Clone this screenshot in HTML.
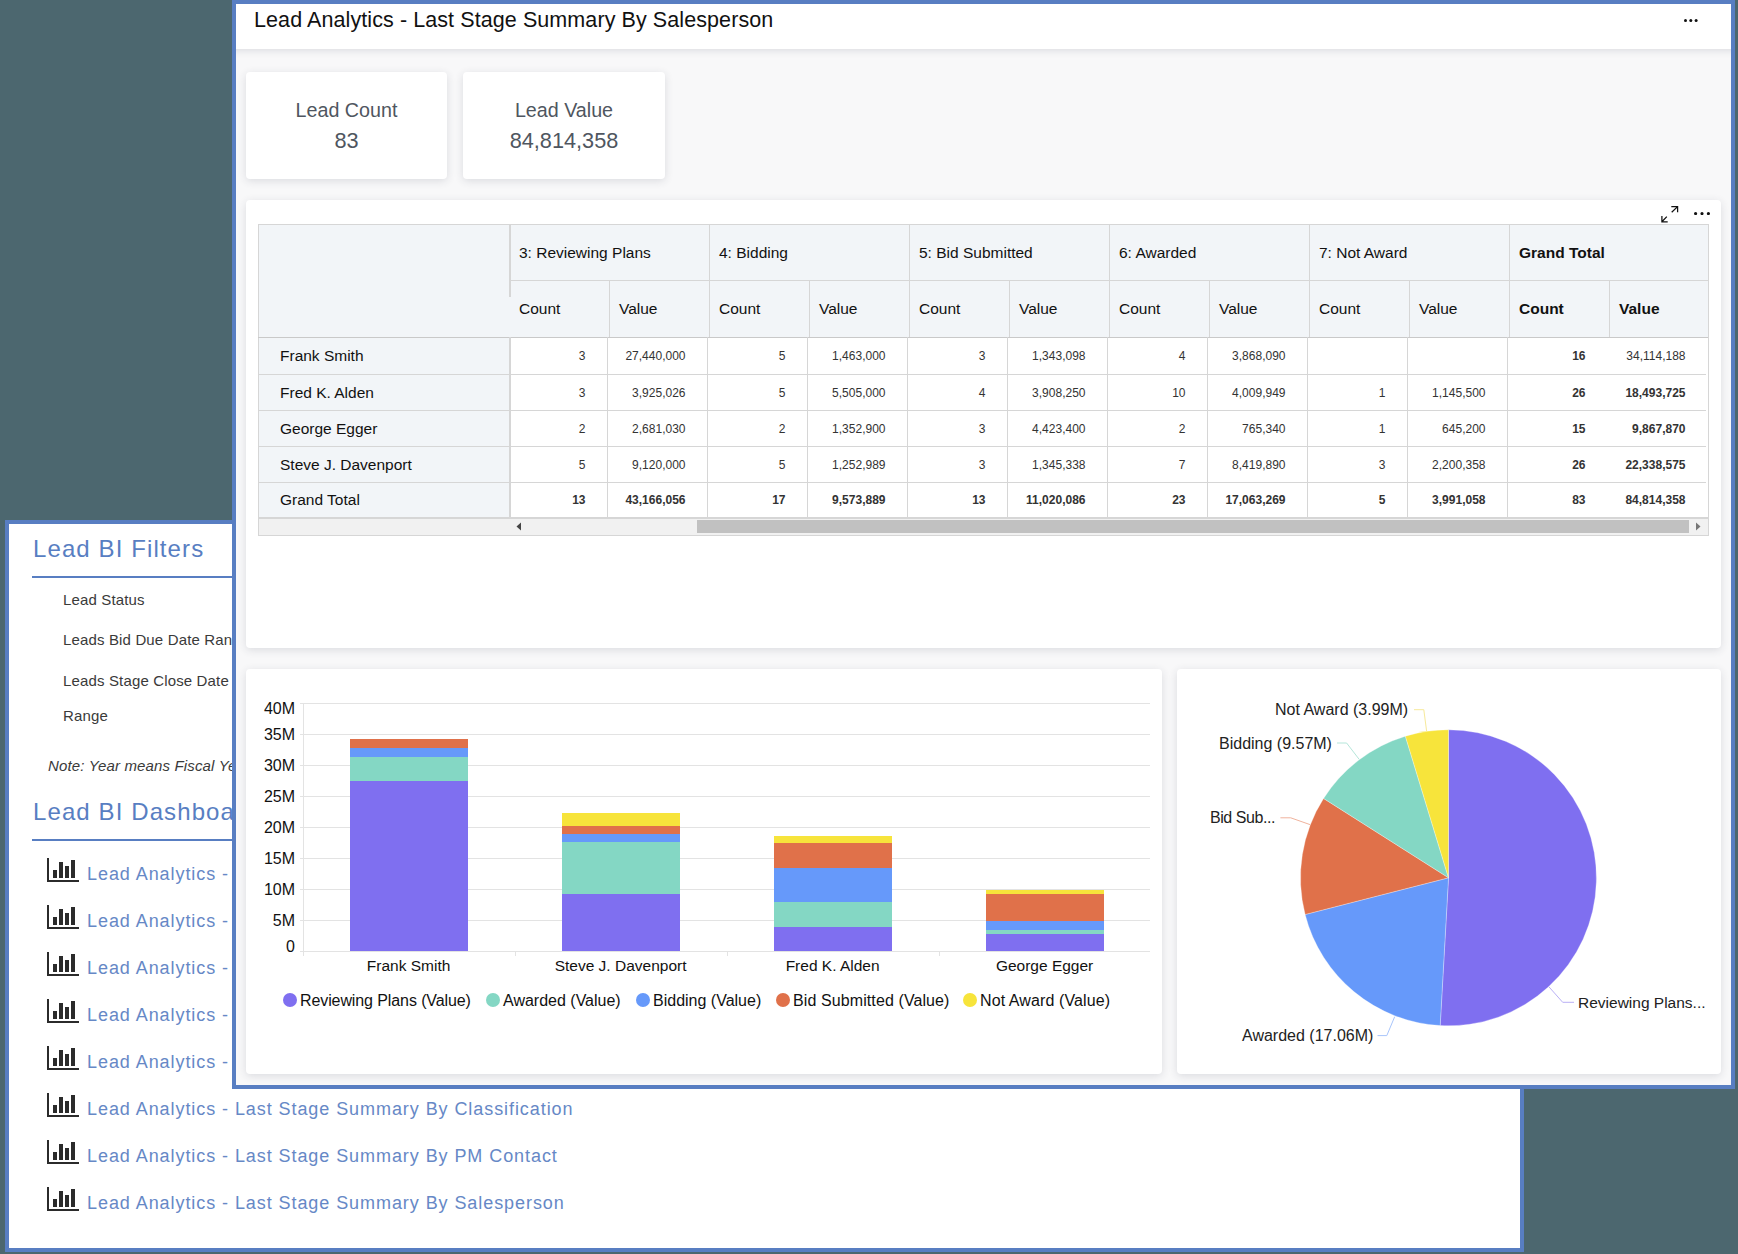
<!DOCTYPE html><html><head><meta charset="utf-8"><style>
*{margin:0;padding:0;box-sizing:border-box}
html,body{width:1738px;height:1254px;overflow:hidden;background:#4c676f;font-family:"Liberation Sans", sans-serif}
.a{position:absolute;white-space:nowrap}
.lp{position:absolute;left:5px;top:520px;width:1519px;height:732px;border:4px solid #587ec2;background:#fff}
.mp{position:absolute;left:232px;top:0px;width:1503px;height:1089px;border:4px solid #587ec2;background:#f8f8f9;overflow:hidden}
.card{position:absolute;background:#fff;border-radius:4px;box-shadow:0 2px 8px rgba(40,50,70,0.14)}
.lt{font-size:15px;color:#3a3a3a;letter-spacing:0.15px}
.dl{font-size:18px;color:#6688c6;letter-spacing:0.93px}
</style></head><body>

<div class="lp"></div>
<div class="a" style="left:33px;top:533.3px;font-size:24px;color:#587ec2;line-height:32px;letter-spacing:1.1px">Lead BI Filters</div>
<div class="a" style="left:32px;top:576px;width:200px;height:2px;background:#587ec2"></div>
<div class="a lt" style="left:63px;top:591px;line-height:17px">Lead Status</div>
<div class="a lt" style="left:63px;top:631px;line-height:17px">Leads Bid Due Date Range</div>
<div class="a lt" style="left:63px;top:672px;line-height:17px">Leads Stage Close Date</div>
<div class="a lt" style="left:63px;top:707px;line-height:17px">Range</div>
<div class="a lt" style="left:48px;top:757px;line-height:17px;font-style:italic">Note: Year means Fiscal Year</div>
<div class="a" style="left:33px;top:796px;font-size:24px;color:#587ec2;line-height:32px;letter-spacing:1.1px">Lead BI Dashboards</div>
<div class="a" style="left:32px;top:839px;width:200px;height:2px;background:#587ec2"></div>
<svg width="34" height="26" viewBox="0 0 34 26" style="position:absolute;left:47px;top:858px"><rect x="0" y="0" width="2" height="24" fill="#2b2b2b"/><rect x="0" y="22" width="32" height="2" fill="#2b2b2b"/><rect x="6" y="12" width="4" height="8" fill="#2b2b2b"/><rect x="12" y="4" width="4" height="16" fill="#2b2b2b"/><rect x="18" y="8" width="4" height="12" fill="#2b2b2b"/><rect x="24" y="2" width="4" height="18" fill="#2b2b2b"/></svg>
<div class="a dl" style="left:87px;top:863.5px;line-height:20px">Lead Analytics - Last Stage Summary By Bid Type</div>
<svg width="34" height="26" viewBox="0 0 34 26" style="position:absolute;left:47px;top:905px"><rect x="0" y="0" width="2" height="24" fill="#2b2b2b"/><rect x="0" y="22" width="32" height="2" fill="#2b2b2b"/><rect x="6" y="12" width="4" height="8" fill="#2b2b2b"/><rect x="12" y="4" width="4" height="16" fill="#2b2b2b"/><rect x="18" y="8" width="4" height="12" fill="#2b2b2b"/><rect x="24" y="2" width="4" height="18" fill="#2b2b2b"/></svg>
<div class="a dl" style="left:87px;top:910.5px;line-height:20px">Lead Analytics - Last Stage Summary By Customer</div>
<svg width="34" height="26" viewBox="0 0 34 26" style="position:absolute;left:47px;top:952px"><rect x="0" y="0" width="2" height="24" fill="#2b2b2b"/><rect x="0" y="22" width="32" height="2" fill="#2b2b2b"/><rect x="6" y="12" width="4" height="8" fill="#2b2b2b"/><rect x="12" y="4" width="4" height="16" fill="#2b2b2b"/><rect x="18" y="8" width="4" height="12" fill="#2b2b2b"/><rect x="24" y="2" width="4" height="18" fill="#2b2b2b"/></svg>
<div class="a dl" style="left:87px;top:957.5px;line-height:20px">Lead Analytics - Last Stage Summary By Division</div>
<svg width="34" height="26" viewBox="0 0 34 26" style="position:absolute;left:47px;top:999px"><rect x="0" y="0" width="2" height="24" fill="#2b2b2b"/><rect x="0" y="22" width="32" height="2" fill="#2b2b2b"/><rect x="6" y="12" width="4" height="8" fill="#2b2b2b"/><rect x="12" y="4" width="4" height="16" fill="#2b2b2b"/><rect x="18" y="8" width="4" height="12" fill="#2b2b2b"/><rect x="24" y="2" width="4" height="18" fill="#2b2b2b"/></svg>
<div class="a dl" style="left:87px;top:1004.5px;line-height:20px">Lead Analytics - Last Stage Summary By Estimator</div>
<svg width="34" height="26" viewBox="0 0 34 26" style="position:absolute;left:47px;top:1046px"><rect x="0" y="0" width="2" height="24" fill="#2b2b2b"/><rect x="0" y="22" width="32" height="2" fill="#2b2b2b"/><rect x="6" y="12" width="4" height="8" fill="#2b2b2b"/><rect x="12" y="4" width="4" height="16" fill="#2b2b2b"/><rect x="18" y="8" width="4" height="12" fill="#2b2b2b"/><rect x="24" y="2" width="4" height="18" fill="#2b2b2b"/></svg>
<div class="a dl" style="left:87px;top:1051.5px;line-height:20px">Lead Analytics - Last Stage Summary By Lead Source</div>
<svg width="34" height="26" viewBox="0 0 34 26" style="position:absolute;left:47px;top:1093px"><rect x="0" y="0" width="2" height="24" fill="#2b2b2b"/><rect x="0" y="22" width="32" height="2" fill="#2b2b2b"/><rect x="6" y="12" width="4" height="8" fill="#2b2b2b"/><rect x="12" y="4" width="4" height="16" fill="#2b2b2b"/><rect x="18" y="8" width="4" height="12" fill="#2b2b2b"/><rect x="24" y="2" width="4" height="18" fill="#2b2b2b"/></svg>
<div class="a dl" style="left:87px;top:1098.5px;line-height:20px">Lead Analytics - Last Stage Summary By Classification</div>
<svg width="34" height="26" viewBox="0 0 34 26" style="position:absolute;left:47px;top:1140px"><rect x="0" y="0" width="2" height="24" fill="#2b2b2b"/><rect x="0" y="22" width="32" height="2" fill="#2b2b2b"/><rect x="6" y="12" width="4" height="8" fill="#2b2b2b"/><rect x="12" y="4" width="4" height="16" fill="#2b2b2b"/><rect x="18" y="8" width="4" height="12" fill="#2b2b2b"/><rect x="24" y="2" width="4" height="18" fill="#2b2b2b"/></svg>
<div class="a dl" style="left:87px;top:1145.5px;line-height:20px">Lead Analytics - Last Stage Summary By PM Contact</div>
<svg width="34" height="26" viewBox="0 0 34 26" style="position:absolute;left:47px;top:1187px"><rect x="0" y="0" width="2" height="24" fill="#2b2b2b"/><rect x="0" y="22" width="32" height="2" fill="#2b2b2b"/><rect x="6" y="12" width="4" height="8" fill="#2b2b2b"/><rect x="12" y="4" width="4" height="16" fill="#2b2b2b"/><rect x="18" y="8" width="4" height="12" fill="#2b2b2b"/><rect x="24" y="2" width="4" height="18" fill="#2b2b2b"/></svg>
<div class="a dl" style="left:87px;top:1192.5px;line-height:20px">Lead Analytics - Last Stage Summary By Salesperson</div>
<div class="mp"><div class="a" style="left:-20px;top:0px;width:1535px;height:45px;background:#fff;box-shadow:0 2px 7px rgba(40,50,70,0.13)"></div></div>
<div class="a" style="left:254px;top:7.3px;font-size:21.5px;letter-spacing:0.085px;color:#111;line-height:26px">Lead Analytics - Last Stage Summary By Salesperson</div>
<svg class="a" style="left:1684.2px;top:19.4px" width="13.6" height="3.0"><circle cx="1.5" cy="1.5" r="1.5" fill="#111"/><circle cx="6.8" cy="1.5" r="1.5" fill="#111"/><circle cx="12.1" cy="1.5" r="1.5" fill="#111"/></svg>
<div class="card" style="left:246px;top:72px;width:201px;height:107px"></div>
<div class="a" style="left:246px;top:98px;width:201px;text-align:center;font-size:19.7px;color:#4f5660;line-height:24px">Lead Count</div>
<div class="a" style="left:246px;top:128px;width:201px;text-align:center;font-size:21.7px;color:#4f5660;line-height:26px">83</div>
<div class="card" style="left:463px;top:72px;width:202px;height:107px"></div>
<div class="a" style="left:463px;top:98px;width:202px;text-align:center;font-size:19.7px;color:#4f5660;line-height:24px">Lead Value</div>
<div class="a" style="left:463px;top:128px;width:202px;text-align:center;font-size:21.7px;color:#4f5660;line-height:26px">84,814,358</div>
<div class="card" style="left:246px;top:200px;width:1475px;height:448px"></div>
<svg class="a" style="left:1693.5px;top:212.3px" width="16.0" height="3.2"><circle cx="1.6" cy="1.6" r="1.6" fill="#111"/><circle cx="8.0" cy="1.6" r="1.6" fill="#111"/><circle cx="14.4" cy="1.6" r="1.6" fill="#111"/></svg>
<svg class="a" style="left:1650px;top:200px" width="40" height="30" viewBox="0 0 40 30"><path d="M21.3 6.6H27.6V12.2M27.6 6.6L21.7 12.2M11.9 15.9V21.8H17.7M11.9 21.8L16.8 16.6" stroke="#111" stroke-width="1.25" fill="none"/></svg>
<div class="a" style="left:258px;top:224px;width:1451px;height:113px;background:#f2f5f8;border:1px solid #d6d6d6;border-bottom:0"></div>
<div class="a" style="left:258px;top:337px;width:251px;height:180px;background:#f2f5f8;border-left:1px solid #d6d6d6"></div>
<div class="a" style="left:511px;top:337px;width:1196px;height:180px;background:#fff"></div>
<div class="a" style="left:509px;top:224px;width:2px;height:73px;background:#d6d6d6"></div>
<div class="a" style="left:510px;top:280px;width:1199px;height:1px;background:#d6d6d6"></div>
<div class="a" style="left:709px;top:224px;width:1px;height:113px;background:#d6d6d6"></div>
<div class="a" style="left:909px;top:224px;width:1px;height:113px;background:#d6d6d6"></div>
<div class="a" style="left:1109px;top:224px;width:1px;height:113px;background:#d6d6d6"></div>
<div class="a" style="left:1309px;top:224px;width:1px;height:113px;background:#d6d6d6"></div>
<div class="a" style="left:1509px;top:224px;width:1px;height:113px;background:#d6d6d6"></div>
<div class="a" style="left:609px;top:280px;width:1px;height:57px;background:#d6d6d6"></div>
<div class="a" style="left:809px;top:280px;width:1px;height:57px;background:#d6d6d6"></div>
<div class="a" style="left:1009px;top:280px;width:1px;height:57px;background:#d6d6d6"></div>
<div class="a" style="left:1209px;top:280px;width:1px;height:57px;background:#d6d6d6"></div>
<div class="a" style="left:1409px;top:280px;width:1px;height:57px;background:#d6d6d6"></div>
<div class="a" style="left:1609px;top:280px;width:1px;height:57px;background:#d6d6d6"></div>
<div class="a" style="left:258px;top:337px;width:1451px;height:1px;background:#c9c9c9"></div>
<div class="a" style="left:1708px;top:224px;width:1px;height:312px;background:#d6d6d6"></div>
<div class="a" style="left:519px;top:244px;font-size:15.5px;color:#111;line-height:18px;">3: Reviewing Plans</div>
<div class="a" style="left:519px;top:300px;font-size:15.5px;color:#111;line-height:18px;">Count</div>
<div class="a" style="left:619px;top:300px;font-size:15.5px;color:#111;line-height:18px;">Value</div>
<div class="a" style="left:719px;top:244px;font-size:15.5px;color:#111;line-height:18px;">4: Bidding</div>
<div class="a" style="left:719px;top:300px;font-size:15.5px;color:#111;line-height:18px;">Count</div>
<div class="a" style="left:819px;top:300px;font-size:15.5px;color:#111;line-height:18px;">Value</div>
<div class="a" style="left:919px;top:244px;font-size:15.5px;color:#111;line-height:18px;">5: Bid Submitted</div>
<div class="a" style="left:919px;top:300px;font-size:15.5px;color:#111;line-height:18px;">Count</div>
<div class="a" style="left:1019px;top:300px;font-size:15.5px;color:#111;line-height:18px;">Value</div>
<div class="a" style="left:1119px;top:244px;font-size:15.5px;color:#111;line-height:18px;">6: Awarded</div>
<div class="a" style="left:1119px;top:300px;font-size:15.5px;color:#111;line-height:18px;">Count</div>
<div class="a" style="left:1219px;top:300px;font-size:15.5px;color:#111;line-height:18px;">Value</div>
<div class="a" style="left:1319px;top:244px;font-size:15.5px;color:#111;line-height:18px;">7: Not Award</div>
<div class="a" style="left:1319px;top:300px;font-size:15.5px;color:#111;line-height:18px;">Count</div>
<div class="a" style="left:1419px;top:300px;font-size:15.5px;color:#111;line-height:18px;">Value</div>
<div class="a" style="left:1519px;top:244px;font-size:15.5px;color:#111;line-height:18px;font-weight:bold;">Grand Total</div>
<div class="a" style="left:1519px;top:300px;font-size:15.5px;color:#111;line-height:18px;font-weight:bold;">Count</div>
<div class="a" style="left:1619px;top:300px;font-size:15.5px;color:#111;line-height:18px;font-weight:bold;">Value</div>
<div class="a" style="left:280px;top:347px;font-size:15.5px;color:#111;line-height:18px">Frank Smith</div>
<div class="a" style="left:258px;top:374px;width:1448px;height:1px;background:#d6d6d6"></div>
<div class="a" style="left:485.5px;width:100px;text-align:right;top:349px;font-size:12px;line-height:14px;color:#333;">3</div>
<div class="a" style="left:585.5px;width:100px;text-align:right;top:349px;font-size:12px;line-height:14px;color:#333;">27,440,000</div>
<div class="a" style="left:685.5px;width:100px;text-align:right;top:349px;font-size:12px;line-height:14px;color:#333;">5</div>
<div class="a" style="left:785.5px;width:100px;text-align:right;top:349px;font-size:12px;line-height:14px;color:#333;">1,463,000</div>
<div class="a" style="left:885.5px;width:100px;text-align:right;top:349px;font-size:12px;line-height:14px;color:#333;">3</div>
<div class="a" style="left:985.5px;width:100px;text-align:right;top:349px;font-size:12px;line-height:14px;color:#333;">1,343,098</div>
<div class="a" style="left:1085.5px;width:100px;text-align:right;top:349px;font-size:12px;line-height:14px;color:#333;">4</div>
<div class="a" style="left:1185.5px;width:100px;text-align:right;top:349px;font-size:12px;line-height:14px;color:#333;">3,868,090</div>
<div class="a" style="left:1285.5px;width:100px;text-align:right;top:349px;font-size:12px;line-height:14px;color:#333;"></div>
<div class="a" style="left:1385.5px;width:100px;text-align:right;top:349px;font-size:12px;line-height:14px;color:#333;"></div>
<div class="a" style="left:1485.5px;width:100px;text-align:right;top:349px;font-size:12px;line-height:14px;font-weight:bold;color:#333;">16</div>
<div class="a" style="left:1585.5px;width:100px;text-align:right;top:349px;font-size:12px;line-height:14px;color:#333;">34,114,188</div>
<div class="a" style="left:280px;top:383.5px;font-size:15.5px;color:#111;line-height:18px">Fred K. Alden</div>
<div class="a" style="left:258px;top:410px;width:1448px;height:1px;background:#d6d6d6"></div>
<div class="a" style="left:485.5px;width:100px;text-align:right;top:385.5px;font-size:12px;line-height:14px;color:#333;">3</div>
<div class="a" style="left:585.5px;width:100px;text-align:right;top:385.5px;font-size:12px;line-height:14px;color:#333;">3,925,026</div>
<div class="a" style="left:685.5px;width:100px;text-align:right;top:385.5px;font-size:12px;line-height:14px;color:#333;">5</div>
<div class="a" style="left:785.5px;width:100px;text-align:right;top:385.5px;font-size:12px;line-height:14px;color:#333;">5,505,000</div>
<div class="a" style="left:885.5px;width:100px;text-align:right;top:385.5px;font-size:12px;line-height:14px;color:#333;">4</div>
<div class="a" style="left:985.5px;width:100px;text-align:right;top:385.5px;font-size:12px;line-height:14px;color:#333;">3,908,250</div>
<div class="a" style="left:1085.5px;width:100px;text-align:right;top:385.5px;font-size:12px;line-height:14px;color:#333;">10</div>
<div class="a" style="left:1185.5px;width:100px;text-align:right;top:385.5px;font-size:12px;line-height:14px;color:#333;">4,009,949</div>
<div class="a" style="left:1285.5px;width:100px;text-align:right;top:385.5px;font-size:12px;line-height:14px;color:#333;">1</div>
<div class="a" style="left:1385.5px;width:100px;text-align:right;top:385.5px;font-size:12px;line-height:14px;color:#333;">1,145,500</div>
<div class="a" style="left:1485.5px;width:100px;text-align:right;top:385.5px;font-size:12px;line-height:14px;font-weight:bold;color:#333;">26</div>
<div class="a" style="left:1585.5px;width:100px;text-align:right;top:385.5px;font-size:12px;line-height:14px;font-weight:bold;color:#333;">18,493,725</div>
<div class="a" style="left:280px;top:419.5px;font-size:15.5px;color:#111;line-height:18px">George Egger</div>
<div class="a" style="left:258px;top:446px;width:1448px;height:1px;background:#d6d6d6"></div>
<div class="a" style="left:485.5px;width:100px;text-align:right;top:421.5px;font-size:12px;line-height:14px;color:#333;">2</div>
<div class="a" style="left:585.5px;width:100px;text-align:right;top:421.5px;font-size:12px;line-height:14px;color:#333;">2,681,030</div>
<div class="a" style="left:685.5px;width:100px;text-align:right;top:421.5px;font-size:12px;line-height:14px;color:#333;">2</div>
<div class="a" style="left:785.5px;width:100px;text-align:right;top:421.5px;font-size:12px;line-height:14px;color:#333;">1,352,900</div>
<div class="a" style="left:885.5px;width:100px;text-align:right;top:421.5px;font-size:12px;line-height:14px;color:#333;">3</div>
<div class="a" style="left:985.5px;width:100px;text-align:right;top:421.5px;font-size:12px;line-height:14px;color:#333;">4,423,400</div>
<div class="a" style="left:1085.5px;width:100px;text-align:right;top:421.5px;font-size:12px;line-height:14px;color:#333;">2</div>
<div class="a" style="left:1185.5px;width:100px;text-align:right;top:421.5px;font-size:12px;line-height:14px;color:#333;">765,340</div>
<div class="a" style="left:1285.5px;width:100px;text-align:right;top:421.5px;font-size:12px;line-height:14px;color:#333;">1</div>
<div class="a" style="left:1385.5px;width:100px;text-align:right;top:421.5px;font-size:12px;line-height:14px;color:#333;">645,200</div>
<div class="a" style="left:1485.5px;width:100px;text-align:right;top:421.5px;font-size:12px;line-height:14px;font-weight:bold;color:#333;">15</div>
<div class="a" style="left:1585.5px;width:100px;text-align:right;top:421.5px;font-size:12px;line-height:14px;font-weight:bold;color:#333;">9,867,870</div>
<div class="a" style="left:280px;top:455.5px;font-size:15.5px;color:#111;line-height:18px">Steve J. Davenport</div>
<div class="a" style="left:258px;top:482px;width:1448px;height:1px;background:#d6d6d6"></div>
<div class="a" style="left:485.5px;width:100px;text-align:right;top:457.5px;font-size:12px;line-height:14px;color:#333;">5</div>
<div class="a" style="left:585.5px;width:100px;text-align:right;top:457.5px;font-size:12px;line-height:14px;color:#333;">9,120,000</div>
<div class="a" style="left:685.5px;width:100px;text-align:right;top:457.5px;font-size:12px;line-height:14px;color:#333;">5</div>
<div class="a" style="left:785.5px;width:100px;text-align:right;top:457.5px;font-size:12px;line-height:14px;color:#333;">1,252,989</div>
<div class="a" style="left:885.5px;width:100px;text-align:right;top:457.5px;font-size:12px;line-height:14px;color:#333;">3</div>
<div class="a" style="left:985.5px;width:100px;text-align:right;top:457.5px;font-size:12px;line-height:14px;color:#333;">1,345,338</div>
<div class="a" style="left:1085.5px;width:100px;text-align:right;top:457.5px;font-size:12px;line-height:14px;color:#333;">7</div>
<div class="a" style="left:1185.5px;width:100px;text-align:right;top:457.5px;font-size:12px;line-height:14px;color:#333;">8,419,890</div>
<div class="a" style="left:1285.5px;width:100px;text-align:right;top:457.5px;font-size:12px;line-height:14px;color:#333;">3</div>
<div class="a" style="left:1385.5px;width:100px;text-align:right;top:457.5px;font-size:12px;line-height:14px;color:#333;">2,200,358</div>
<div class="a" style="left:1485.5px;width:100px;text-align:right;top:457.5px;font-size:12px;line-height:14px;font-weight:bold;color:#333;">26</div>
<div class="a" style="left:1585.5px;width:100px;text-align:right;top:457.5px;font-size:12px;line-height:14px;font-weight:bold;color:#333;">22,338,575</div>
<div class="a" style="left:280px;top:490.6px;font-size:15.5px;color:#111;line-height:18px">Grand Total</div>
<div class="a" style="left:485.5px;width:100px;text-align:right;top:492.6px;font-size:12px;line-height:14px;font-weight:bold;color:#333;">13</div>
<div class="a" style="left:585.5px;width:100px;text-align:right;top:492.6px;font-size:12px;line-height:14px;font-weight:bold;color:#333;">43,166,056</div>
<div class="a" style="left:685.5px;width:100px;text-align:right;top:492.6px;font-size:12px;line-height:14px;font-weight:bold;color:#333;">17</div>
<div class="a" style="left:785.5px;width:100px;text-align:right;top:492.6px;font-size:12px;line-height:14px;font-weight:bold;color:#333;">9,573,889</div>
<div class="a" style="left:885.5px;width:100px;text-align:right;top:492.6px;font-size:12px;line-height:14px;font-weight:bold;color:#333;">13</div>
<div class="a" style="left:985.5px;width:100px;text-align:right;top:492.6px;font-size:12px;line-height:14px;font-weight:bold;color:#333;">11,020,086</div>
<div class="a" style="left:1085.5px;width:100px;text-align:right;top:492.6px;font-size:12px;line-height:14px;font-weight:bold;color:#333;">23</div>
<div class="a" style="left:1185.5px;width:100px;text-align:right;top:492.6px;font-size:12px;line-height:14px;font-weight:bold;color:#333;">17,063,269</div>
<div class="a" style="left:1285.5px;width:100px;text-align:right;top:492.6px;font-size:12px;line-height:14px;font-weight:bold;color:#333;">5</div>
<div class="a" style="left:1385.5px;width:100px;text-align:right;top:492.6px;font-size:12px;line-height:14px;font-weight:bold;color:#333;">3,991,058</div>
<div class="a" style="left:1485.5px;width:100px;text-align:right;top:492.6px;font-size:12px;line-height:14px;font-weight:bold;color:#333;">83</div>
<div class="a" style="left:1585.5px;width:100px;text-align:right;top:492.6px;font-size:12px;line-height:14px;font-weight:bold;color:#333;">84,814,358</div>
<div class="a" style="left:509px;top:337px;width:2px;height:180px;background:#d6d6d6"></div>
<div class="a" style="left:607px;top:337px;width:1px;height:180px;background:#d6d6d6"></div>
<div class="a" style="left:707px;top:337px;width:1px;height:180px;background:#d6d6d6"></div>
<div class="a" style="left:807px;top:337px;width:1px;height:180px;background:#d6d6d6"></div>
<div class="a" style="left:907px;top:337px;width:1px;height:180px;background:#d6d6d6"></div>
<div class="a" style="left:1007px;top:337px;width:1px;height:180px;background:#d6d6d6"></div>
<div class="a" style="left:1107px;top:337px;width:1px;height:180px;background:#d6d6d6"></div>
<div class="a" style="left:1207px;top:337px;width:1px;height:180px;background:#d6d6d6"></div>
<div class="a" style="left:1307px;top:337px;width:1px;height:180px;background:#d6d6d6"></div>
<div class="a" style="left:1407px;top:337px;width:1px;height:180px;background:#d6d6d6"></div>
<div class="a" style="left:1507px;top:337px;width:1px;height:180px;background:#d6d6d6"></div>
<div class="a" style="left:258px;top:517px;width:1451px;height:19px;background:#f1f1f1;border:1px solid #d6d6d6;border-top:2px solid #d6d6d6"></div>
<div class="a" style="left:697px;top:520px;width:992px;height:13px;background:#c1c1c1"></div>
<svg class="a" style="left:515px;top:522px" width="8" height="9"><path d="M6 0.5L1.5 4.5L6 8.5z" fill="#444"/></svg>
<svg class="a" style="left:1694px;top:522px" width="8" height="9"><path d="M2 0.5L6.5 4.5L2 8.5z" fill="#777"/></svg>
<div class="card" style="left:246px;top:669px;width:916px;height:405px"></div>
<div class="a" style="left:300px;top:951px;width:850px;height:1px;background:#e3e3e3"></div>
<div class="a" style="left:244px;width:51px;text-align:right;top:937.7px;font-size:16px;color:#111;line-height:17px">0</div>
<div class="a" style="left:300px;top:920px;width:850px;height:1px;background:#e3e3e3"></div>
<div class="a" style="left:244px;width:51px;text-align:right;top:911.7px;font-size:16px;color:#111;line-height:17px">5M</div>
<div class="a" style="left:300px;top:889px;width:850px;height:1px;background:#e3e3e3"></div>
<div class="a" style="left:244px;width:51px;text-align:right;top:880.7px;font-size:16px;color:#111;line-height:17px">10M</div>
<div class="a" style="left:300px;top:858px;width:850px;height:1px;background:#e3e3e3"></div>
<div class="a" style="left:244px;width:51px;text-align:right;top:849.7px;font-size:16px;color:#111;line-height:17px">15M</div>
<div class="a" style="left:300px;top:827px;width:850px;height:1px;background:#e3e3e3"></div>
<div class="a" style="left:244px;width:51px;text-align:right;top:818.7px;font-size:16px;color:#111;line-height:17px">20M</div>
<div class="a" style="left:300px;top:796px;width:850px;height:1px;background:#e3e3e3"></div>
<div class="a" style="left:244px;width:51px;text-align:right;top:787.7px;font-size:16px;color:#111;line-height:17px">25M</div>
<div class="a" style="left:300px;top:765px;width:850px;height:1px;background:#e3e3e3"></div>
<div class="a" style="left:244px;width:51px;text-align:right;top:756.7px;font-size:16px;color:#111;line-height:17px">30M</div>
<div class="a" style="left:300px;top:734px;width:850px;height:1px;background:#e3e3e3"></div>
<div class="a" style="left:244px;width:51px;text-align:right;top:725.7px;font-size:16px;color:#111;line-height:17px">35M</div>
<div class="a" style="left:300px;top:703px;width:850px;height:1px;background:#e3e3e3"></div>
<div class="a" style="left:244px;width:51px;text-align:right;top:700px;font-size:16px;color:#111;line-height:17px">40M</div>
<div class="a" style="left:303px;top:703px;width:1px;height:252px;background:#e3e3e3"></div>
<div class="a" style="left:303px;top:951px;width:1px;height:5px;background:#e3e3e3"></div>
<div class="a" style="left:515px;top:951px;width:1px;height:5px;background:#e3e3e3"></div>
<div class="a" style="left:727px;top:951px;width:1px;height:5px;background:#e3e3e3"></div>
<div class="a" style="left:939px;top:951px;width:1px;height:5px;background:#e3e3e3"></div>
<div class="a" style="left:349.6px;top:780.87px;width:118.7px;height:170.13px;background:#7f6ff0"></div>
<div class="a" style="left:349.6px;top:756.89px;width:118.7px;height:23.98px;background:#84d7c4"></div>
<div class="a" style="left:349.6px;top:747.82px;width:118.7px;height:9.07px;background:#6699fa"></div>
<div class="a" style="left:349.6px;top:739.49px;width:118.7px;height:8.33px;background:#e0714a"></div>
<div class="a" style="left:299.6px;width:218px;text-align:center;top:957px;font-size:15.5px;color:#111;line-height:18px">Frank Smith</div>
<div class="a" style="left:561.6px;top:894.46px;width:118.7px;height:56.54px;background:#7f6ff0"></div>
<div class="a" style="left:561.6px;top:842.25px;width:118.7px;height:52.20px;background:#84d7c4"></div>
<div class="a" style="left:561.6px;top:834.48px;width:118.7px;height:7.77px;background:#6699fa"></div>
<div class="a" style="left:561.6px;top:826.14px;width:118.7px;height:8.34px;background:#e0714a"></div>
<div class="a" style="left:561.6px;top:812.50px;width:118.7px;height:13.64px;background:#f7e43b"></div>
<div class="a" style="left:511.6px;width:218px;text-align:center;top:957px;font-size:15.5px;color:#111;line-height:18px">Steve J. Davenport</div>
<div class="a" style="left:773.6px;top:926.66px;width:118.7px;height:24.34px;background:#7f6ff0"></div>
<div class="a" style="left:773.6px;top:901.80px;width:118.7px;height:24.86px;background:#84d7c4"></div>
<div class="a" style="left:773.6px;top:867.67px;width:118.7px;height:34.13px;background:#6699fa"></div>
<div class="a" style="left:773.6px;top:843.44px;width:118.7px;height:24.23px;background:#e0714a"></div>
<div class="a" style="left:773.6px;top:836.34px;width:118.7px;height:7.10px;background:#f7e43b"></div>
<div class="a" style="left:723.6px;width:218px;text-align:center;top:957px;font-size:15.5px;color:#111;line-height:18px">Fred K. Alden</div>
<div class="a" style="left:985.6px;top:934.38px;width:118.7px;height:16.62px;background:#7f6ff0"></div>
<div class="a" style="left:985.6px;top:929.63px;width:118.7px;height:4.75px;background:#84d7c4"></div>
<div class="a" style="left:985.6px;top:921.24px;width:118.7px;height:8.39px;background:#6699fa"></div>
<div class="a" style="left:985.6px;top:893.82px;width:118.7px;height:27.43px;background:#e0714a"></div>
<div class="a" style="left:985.6px;top:889.82px;width:118.7px;height:4.00px;background:#f7e43b"></div>
<div class="a" style="left:935.6px;width:218px;text-align:center;top:957px;font-size:15.5px;color:#111;line-height:18px">George Egger</div>
<div class="a" style="left:283px;top:993px;width:14px;height:14px;border-radius:50%;background:#7f6ff0"></div>
<div class="a" style="left:300px;top:991px;font-size:16px;color:#111;line-height:19px;letter-spacing:-0.1px">Reviewing Plans (Value)</div>
<div class="a" style="left:486px;top:993px;width:14px;height:14px;border-radius:50%;background:#84d7c4"></div>
<div class="a" style="left:503px;top:991px;font-size:16px;color:#111;line-height:19px;letter-spacing:0px">Awarded (Value)</div>
<div class="a" style="left:636px;top:993px;width:14px;height:14px;border-radius:50%;background:#6699fa"></div>
<div class="a" style="left:653px;top:991px;font-size:16px;color:#111;line-height:19px;letter-spacing:0px">Bidding (Value)</div>
<div class="a" style="left:776px;top:993px;width:14px;height:14px;border-radius:50%;background:#e0714a"></div>
<div class="a" style="left:793px;top:991px;font-size:16px;color:#111;line-height:19px;letter-spacing:0.1px">Bid Submitted (Value)</div>
<div class="a" style="left:963px;top:993px;width:14px;height:14px;border-radius:50%;background:#f7e43b"></div>
<div class="a" style="left:980px;top:991px;font-size:16px;color:#111;line-height:19px;letter-spacing:0.1px">Not Award (Value)</div>
<div class="card" style="left:1177px;top:669px;width:544px;height:405px"></div>
<svg class="a" style="left:0;top:0" width="1738" height="1254"><path d="M1448.5,877.8 L1448.50,729.80 A148,148 0 1 1 1440.18,1025.57 Z" fill="#7f6ff0" stroke="#fff" stroke-width="0.3"/><path d="M1448.5,877.8 L1440.18,1025.57 A148,148 0 0 1 1305.12,914.49 Z" fill="#6699fa" stroke="#fff" stroke-width="0.3"/><path d="M1448.5,877.8 L1305.12,914.49 A148,148 0 0 1 1323.57,798.45 Z" fill="#e0714a" stroke="#fff" stroke-width="0.3"/><path d="M1448.5,877.8 L1323.57,798.45 A148,148 0 0 1 1405.38,736.22 Z" fill="#84d7c4" stroke="#fff" stroke-width="0.3"/><path d="M1448.5,877.8 L1405.38,736.22 A148,148 0 0 1 1448.50,729.80 Z" fill="#f7e43b" stroke="#fff" stroke-width="0.3"/><path d="M1414,709.7 H1423.8 L1426.6,731" stroke="#f7e99a" stroke-width="1" fill="none"/><path d="M1337,743 H1346.6 L1359.3,759.5" stroke="#b5e6da" stroke-width="1" fill="none"/><path d="M1280.4,817.8 H1290.7 L1310,824.6" stroke="#f0b39d" stroke-width="1" fill="none"/><path d="M1377.5,1035.6 H1386.8 L1394.7,1016.7" stroke="#a8c5fb" stroke-width="1" fill="none"/><path d="M1549,986.9 L1562.7,1002.3 H1574" stroke="#b9b0f6" stroke-width="1" fill="none"/></svg>
<div class="a" style="left:1275px;top:700.2px;font-size:16px;color:#222;line-height:19px;letter-spacing:0px">Not Award (3.99M)</div>
<div class="a" style="left:1219px;top:733.5px;font-size:16px;color:#222;line-height:19px;letter-spacing:0px">Bidding (9.57M)</div>
<div class="a" style="left:1210px;top:808.3px;font-size:16px;color:#222;line-height:19px;letter-spacing:-0.45px">Bid Sub...</div>
<div class="a" style="left:1242px;top:1026.1px;font-size:16px;color:#222;line-height:19px;letter-spacing:0px">Awarded (17.06M)</div>
<div class="a" style="left:1578px;top:992.7px;font-size:15.5px;color:#222;line-height:19px;letter-spacing:0px">Reviewing Plans...</div>
</body></html>
